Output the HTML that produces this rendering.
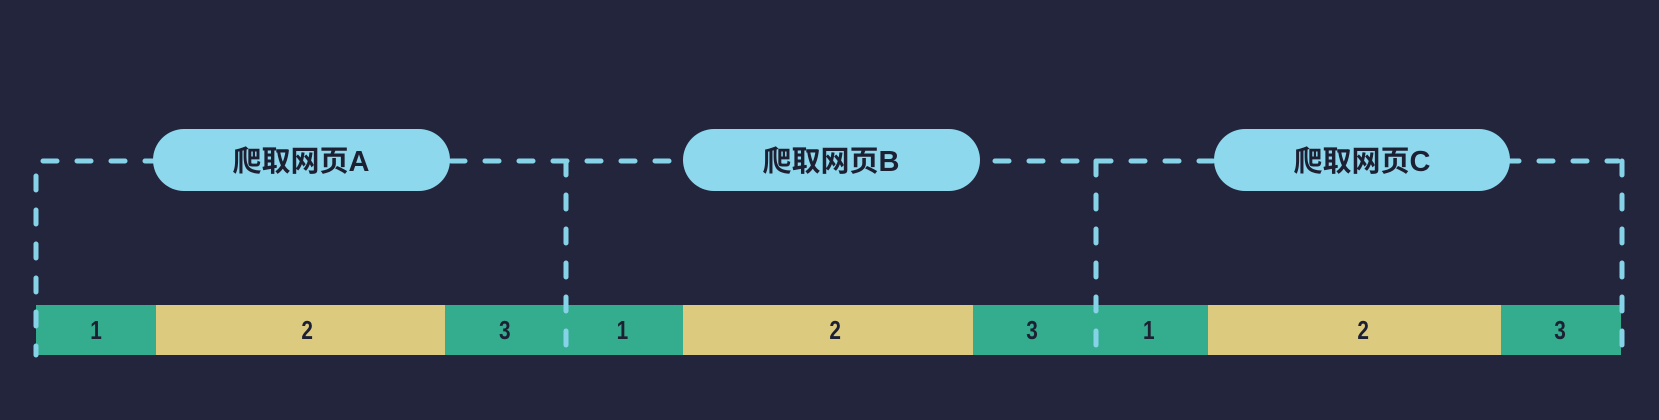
<!DOCTYPE html>
<html><head><meta charset="utf-8"><style>
html,body{margin:0;padding:0;background:#23253d;width:1659px;height:420px;overflow:hidden}
</style></head><body>
<svg width="1659" height="420" xmlns="http://www.w3.org/2000/svg">
<rect width="1659" height="420" fill="#23253d"/>
<g fill="#34ad8f">
<rect x="36" y="305" width="120" height="50"/><rect x="445" y="305" width="238" height="50"/><rect x="973" y="305" width="235" height="50"/><rect x="1501" y="305" width="120" height="50"/>
</g>
<g fill="#dccb7f">
<rect x="156" y="305" width="289" height="50"/><rect x="683" y="305" width="290" height="50"/><rect x="1208" y="305" width="293" height="50"/>
</g>
<g fill="none" stroke="#86d3e8" stroke-width="5" stroke-linecap="round" stroke-dasharray="14 20">
<path d="M43 161 H1618"/>
<path d="M36 176 V355"/><path d="M566 161 V355"/><path d="M1096 161 V355"/><path d="M1622 161 V355"/>
</g>
<g fill="#8dd8ec">
<rect x="153" y="129" width="297" height="62" rx="31"/>
<rect x="683" y="129" width="297" height="62" rx="31"/>
<rect x="1214" y="129" width="296" height="62" rx="31"/>
</g>
<g font-family="Liberation Sans, Noto Sans CJK SC, sans-serif" font-size="29" font-weight="bold" fill="#1d1f33" text-anchor="middle">
<text x="301" y="171">爬取网页A</text>
<text x="831" y="171">爬取网页B</text>
<text x="1362" y="171">爬取网页C</text>
</g>
<g font-family="Liberation Sans, sans-serif" font-weight="bold" font-size="26" fill="#1d1f33" text-anchor="middle" transform="scale(0.8,1)">
<text x="120" y="339">1</text><text x="384" y="339">2</text><text x="631" y="339">3</text>
<text x="778" y="339">1</text><text x="1044" y="339">2</text><text x="1290" y="339">3</text>
<text x="1436" y="339">1</text><text x="1704" y="339">2</text><text x="1950" y="339">3</text>
</g>
</svg>
</body></html>
